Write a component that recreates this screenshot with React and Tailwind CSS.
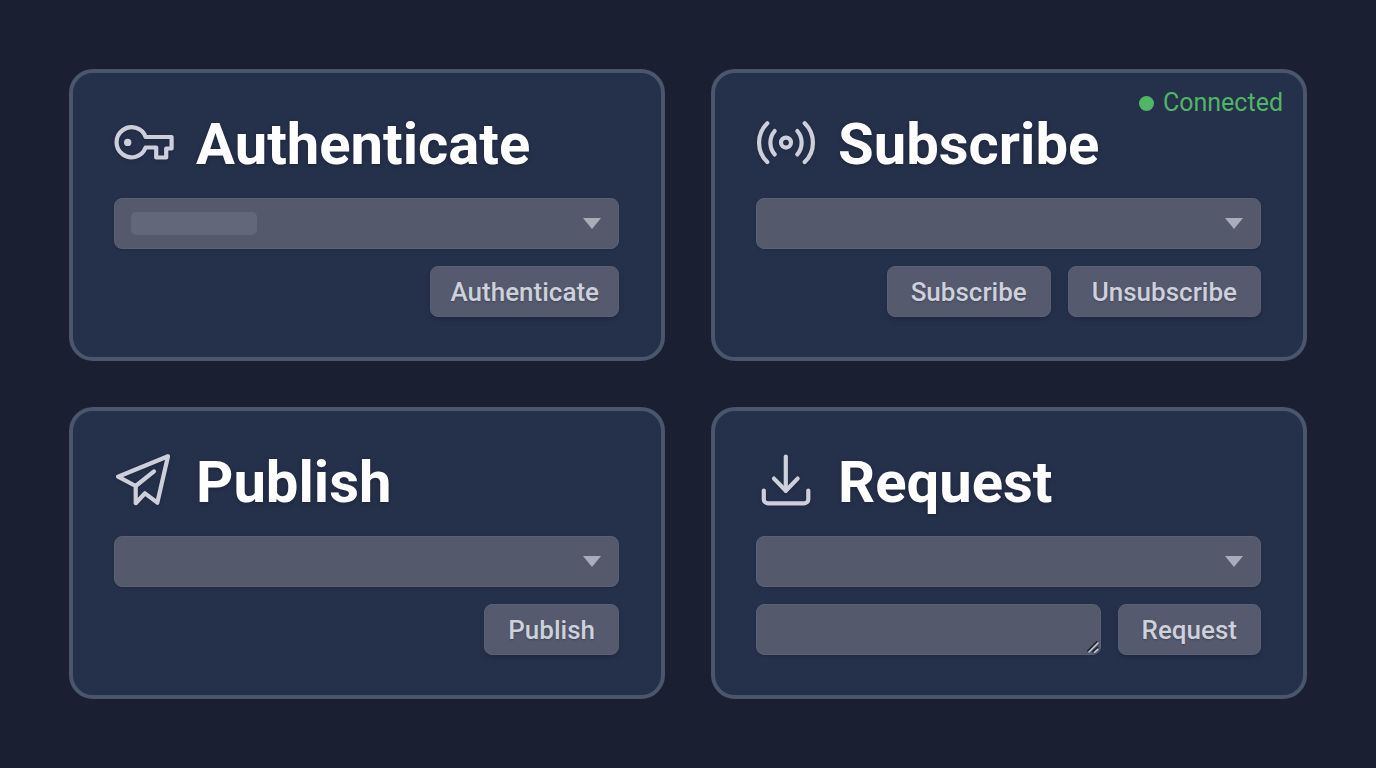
import React, { useState } from "react";

const iconProps = {
  viewBox: "0 0 60 60",
  fill: "none",
  stroke: "currentColor",
  strokeWidth: 4.2,
  strokeLinecap: "round",
  strokeLinejoin: "round",
  "aria-hidden": true,
  className: "size-[60px] shrink-0 text-[#cdd0da] drop-shadow-sm",
};

const KeyIcon = () => (
  <svg {...iconProps}>
    <path d="M31.6 34.5A15 15 0 1 1 31.6 24H57.6V35.5H52.2V44.5H42.2V34.5Z" />
    <circle cx="13.7" cy="29.4" r="3.7" fill="currentColor" stroke="none" />
  </svg>
);

const SignalIcon = () => (
  <svg {...iconProps}>
    <circle cx="30" cy="29.6" r="5" />
    <path d="M18.7 18a18 18 0 0 0 0 23.4" />
    <path d="M41.3 18a18 18 0 0 1 0 23.4" />
    <path d="M11.3 10.3a27 27 0 0 0 0 38.8" />
    <path d="M48.7 10.3a27 27 0 0 1 0 38.8" />
  </svg>
);

const PlaneIcon = () => (
  <svg {...iconProps}>
    <path d="M54 5.2L4 25.7L21.7 35V52.2L31 42.3L43.3 51.7Z" />
    <path d="M21.7 35L40 20.4" />
  </svg>
);

const DownloadIcon = () => (
  <svg {...iconProps}>
    <path d="M29.8 5.5V39.8" />
    <path d="M18 27.6L29.8 39.8L41.6 27.6" />
    <path d="M7.8 39.5V48.3a4 4 0 0 0 4 4H48.3a4 4 0 0 0 4-4V39.5" />
  </svg>
);

function Card({ id, title, icon, status, children }) {
  return (
    <section
      aria-labelledby={id}
      className="relative rounded-3xl border-4 border-[#4a566b] bg-[#25304b] pt-[38px] pr-[42px] pb-10 pl-[41px]"
    >
      {status}
      <div className="mb-[23px] flex items-center gap-[22px]">
        {icon}
        <h2
          id={id}
          className="pt-0.5 text-[58px] leading-[62px] font-bold text-white [text-shadow:0_1px_4px_rgba(0,0,0,0.25)]"
        >
          {title}
        </h2>
      </div>
      <div className="flex flex-col gap-[17px]">{children}</div>
    </section>
  );
}

function Select({ label, placeholder }) {
  const [value, setValue] = useState("");

  return (
    <div className="relative">
      <select
        aria-label={label}
        value={value}
        onChange={(e) => setValue(e.target.value)}
        className="block h-[51px] w-full appearance-none rounded-lg border border-[#5a6174] bg-[#545a6c] px-4 text-[26px] text-[#cdd1db] shadow-sm"
      >
        <option value=""></option>
      </select>
      {placeholder && (
        <span className="pointer-events-none absolute top-[14px] left-[17px] h-[23px] w-[126px] rounded-[5px] bg-[#62677a]" />
      )}
      <svg
        viewBox="0 0 18 11"
        aria-hidden="true"
        className="pointer-events-none absolute top-5 right-[18px] h-[11px] w-[18px] fill-[#a9adba]"
      >
        <path d="M0 0H18L9 11Z" />
      </svg>
    </div>
  );
}

function Button({ children, className = "px-[23px]" }) {
  return (
    <button
      type="button"
      className={`h-[51px] rounded-lg border border-[#5a6074] bg-[#555a6e] text-[26px] leading-8 font-medium text-[#cdd1db] shadow-md [text-shadow:0_1px_2px_rgba(0,0,0,0.25)] ${className}`}
    >
      {children}
    </button>
  );
}

function Connected() {
  return (
    <div className="absolute top-3 right-5 flex items-center gap-[9px] text-[25px] leading-9 text-[#50b564]">
      <span className="size-[15px] rounded-full bg-[#50b564]" />
      Connected
    </div>
  );
}

export default function App() {
  const [message, setMessage] = useState("");

  return (
    <main className="grid min-h-screen content-start gap-[46px] bg-[#1a2032] p-[69px] font-[Roboto,sans-serif] lg:grid-cols-2">
      <Card id="authenticate" title="Authenticate" icon={<KeyIcon />}>
        <Select label="Authentication" placeholder />
        <div className="flex justify-end gap-[17px]">
          <Button className="px-[19px]">Authenticate</Button>
        </div>
      </Card>

      <Card
        id="subscribe"
        title="Subscribe"
        icon={<SignalIcon />}
        status={<Connected />}
      >
        <Select label="Subscription" />
        <div className="flex justify-end gap-[17px]">
          <Button>Subscribe</Button>
          <Button>Unsubscribe</Button>
        </div>
      </Card>

      <Card id="publish" title="Publish" icon={<PlaneIcon />}>
        <Select label="Publish topic" />
        <div className="flex justify-end gap-[17px]">
          <Button>Publish</Button>
        </div>
      </Card>

      <Card id="request" title="Request" icon={<DownloadIcon />}>
        <Select label="Request topic" />
        <div className="flex gap-[17px]">
          <div className="relative min-w-0 flex-1">
            <textarea
              aria-label="Request message"
              rows={1}
              value={message}
              onChange={(e) => setMessage(e.target.value)}
              className="block h-[51px] w-full resize-none rounded-lg border border-[#5a6174] bg-[#545a6c] px-4 py-2 text-[26px] leading-8 text-[#cdd1db] shadow-sm"
            />
            {/* resize grip */}
            <svg
              viewBox="0 0 12 12"
              fill="none"
              strokeLinecap="round"
              aria-hidden="true"
              className="pointer-events-none absolute right-[2px] bottom-[2px] size-3"
            >
              <path d="M0.8 9.8L9.8 0.8M6 10.4L10.8 6" stroke="#1d2434" strokeWidth="1.6" />
              <path d="M2 11L11 2M7.6 11.2L10.8 8.4" stroke="#c9cdd6" strokeWidth="1.4" />
            </svg>
          </div>
          <Button>Request</Button>
        </div>
      </Card>
    </main>
  );
}
